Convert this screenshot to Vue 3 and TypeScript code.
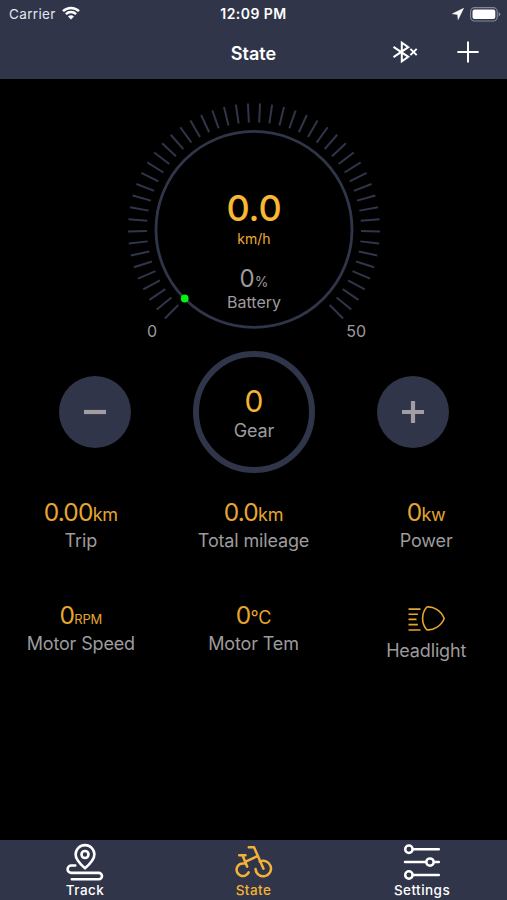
<script setup lang="ts">
interface Stat {
  value: string
  unit: string
  label: string
  size: 'sm' | 'md'
  icon?: boolean
}

const tickCount = 50
const ticks: number[] = Array.from(
  { length: tickCount },
  (_, i) => -135 + (i * 270) / (tickCount - 1),
)

const stats: Stat[] = [
  { value: '0.00', unit: 'km', label: 'Trip', size: 'md' },
  { value: '0.0', unit: 'km', label: 'Total mileage', size: 'md' },
  { value: '0', unit: 'kw', label: 'Power', size: 'md' },
  { value: '0', unit: 'RPM', label: 'Motor Speed', size: 'sm' },
  { value: '0', unit: '°C', label: 'Motor Tem', size: 'md' },
  { value: '', unit: '', label: 'Headlight', size: 'md', icon: true },
]
</script>

<template>
  <div class="screen">
    <header class="header">
      <div class="status">
        <div class="carrier">
          <span>Carrier</span>
          <svg class="wifi" width="18" height="14" viewBox="0 0 18 14">
            <g fill="none" stroke="#fff" stroke-width="2.5">
              <path d="M1 5.1a11.6 11.6 0 0 1 16 0" />
              <path d="M3.9 8.2a7.3 7.3 0 0 1 10.2 0" />
            </g>
            <path d="M9 13.6 6 10.6a4.3 4.3 0 0 1 6 0z" fill="#fff" />
          </svg>
        </div>
        <span class="clock">12:09 PM</span>
        <div class="power">
          <svg width="12" height="12" viewBox="0 0 12 12">
            <path d="M11.6.3.4 5.800l5.200.6.5 5.200z" fill="#fff" stroke="#fff" stroke-width=".5" stroke-linejoin="round" />
          </svg>
          <svg width="31" height="15" viewBox="0 0 31 15">
            <rect x=".6" y=".6" width="26.6" height="13.4" rx="4" fill="none" stroke="#858997" stroke-width="1.1" />
            <rect x="2.5" y="2.5" width="22.8" height="9.6" rx="2" fill="#fff" />
            <path d="M28.6 5v4.6q1.7-.8 1.7-2.3T28.6 5z" fill="#858997" />
          </svg>
        </div>
      </div>
      <div class="navbar">
        <h1 class="title">State</h1>
        <div class="actions">
          <svg width="28" height="26" viewBox="0 0 28 26" fill="none" stroke="#fff" stroke-width="2">
            <path d="M2.500 7.800 17.300 17.800 10.800 22.300V3.700l6.500 4.500L2.500 18.200" />
            <path d="m19.4 9.900 6.300 6.200m0-6.200-6.300 6.200" />
          </svg>
          <svg width="22" height="22" viewBox="0 0 22 22" fill="none" stroke="#fff" stroke-width="2">
            <path d="M11 .4v21.2M.4 11h21.2" />
          </svg>
        </div>
      </div>
    </header>

    <main class="main">
      <section class="gauge">
        <svg class="dial" width="256" height="256" viewBox="-128 -128.4 256 256">
          <g stroke="#30354a" stroke-width="2">
            <line v-for="angle in ticks" :key="angle" x1="0" y1="-126" x2="0" y2="-107" :transform="`rotate(${angle})`" />
          </g>
          <circle r="98" fill="none" stroke="#30354a" stroke-width="2.8" />
          <circle cx="-69.3" cy="69.1" r="3.9" fill="#00f410" />
        </svg>
        <div class="readout">
          <div class="speed">0.0</div>
          <div class="speed-unit">km/h</div>
          <div class="battery">0<span class="percent">%</span></div>
          <div class="battery-label">Battery</div>
        </div>
        <div class="scale"><span>0</span><span>50</span></div>
      </section>

      <section class="gear-row">
        <button class="round" type="button" aria-label="Gear down">
          <svg width="22" height="22" viewBox="0 0 22 22"><path d="M0 11h22" stroke="#a19da2" stroke-width="4.2" /></svg>
        </button>
        <div class="gear">
          <div class="gear-value">0</div>
          <div class="gear-label">Gear</div>
        </div>
        <button class="round" type="button" aria-label="Gear up">
          <svg width="22" height="22" viewBox="0 0 22 22"><path d="M0 11h22M11 0v22" stroke="#a19da2" stroke-width="4.2" /></svg>
        </button>
      </section>

      <section class="stats">
        <div v-for="stat in stats" :key="stat.label" class="stat">
          <svg v-if="stat.icon" class="lamp" width="38" height="26" viewBox="0 0 38 26" fill="none" stroke="#e5a62f" stroke-width="1.6">
            <path d="M1.500 3.100h12M1.500 8.200h9.400M1.500 13.400h8M1.500 18.600h9.400M1.500 24h12" />
            <path d="M19.800 1C26 .2 34 4.200 37.200 12.500 34 20.500 26 24.600 19.800 23.700 14.200 17.500 14.200 7.500 19.800 1z" stroke-linejoin="round" />
          </svg>
          <div v-else class="value"><span class="number">{{ stat.value }}</span><span :class="['unit', stat.size]">{{ stat.unit }}</span></div>
          <div class="label">{{ stat.label }}</div>
        </div>
      </section>
    </main>

    <nav class="tabs">
      <a class="tab">
        <svg width="38" height="38" viewBox="0 0 38 38" fill="none" stroke="#fff" stroke-width="2.600" stroke-linecap="round" stroke-linejoin="round">
          <path d="M19 25.300C13.500 20.500 9.600 16.500 9.600 11.500a9.400 9.400 0 0 1 18.800 0C28.400 16.500 24.500 20.500 19 25.300z" />
          <circle cx="19" cy="11.500" r="3.500" />
          <path d="M9.300 22.500H5.300a3.700 3.700 0 0 0 0 7.400h27.500a3.200 3.200 0 0 1 0 6.400H5.800" />
        </svg>
        <span class="tab-name">Track</span>
      </a>
      <a class="tab active">
        <svg width="38" height="38" viewBox="0 0 38 38" fill="none" stroke="#f5b335" stroke-width="2.500" stroke-linecap="round" stroke-linejoin="round">
          <path d="M9.500 20.600A6.300 6.300 0 1 0 13.600 29.400" />
          <path d="M24.800 18.700a7.700 7.700 0 1 1-4.200 7.400" />
          <path d="M28.500 25.700 19 4.200h-5.200M4.200 12.300h6.300M7.600 12.500l4.600 11.200M10.200 18.800l12.800-5.900" />
        </svg>
        <span class="tab-name">State</span>
      </a>
      <a class="tab">
        <svg width="38" height="38" viewBox="0 0 38 38" fill="none" stroke="#fff" stroke-width="2.500" stroke-linecap="round">
          <circle cx="5.900" cy="6.300" r="3.700" />
          <path d="M9.800 6.300h26M2 19.100h20.500M31 19.100h4.800M9.800 32h26" />
          <circle cx="27" cy="19.100" r="3.700" />
          <circle cx="5.900" cy="32" r="3.700" />
        </svg>
        <span class="tab-name">Settings</span>
      </a>
    </nav>
  </div>
</template>

<style>
body {
  margin: 0;
  background: #000;
}
</style>

<style scoped>
.screen {
  display: flex;
  flex-direction: column;
  width: 507px;
  height: 900px;
  overflow: hidden;
  background: #000;
  font-family: Inter, "Liberation Sans", sans-serif;
  color: #9d9b9d;
}
.header {
  height: 79px;
  flex: none;
  background: #30354a;
  color: #fff;
}
.status {
  display: grid;
  grid-template-columns: 1fr auto 1fr;
  align-items: center;
  height: 28px;
  padding: 0 6px 0 9px;
}
.carrier {
  display: flex;
  align-items: center;
  gap: 6px;
  font-size: 13.5px;
  letter-spacing: 0.35px;
  color: #e4e6ee;
}
.wifi {
  margin-top: -2px;
}
.clock {
  margin: 0 3px 2px 0;
  font-size: 14px;
  font-weight: 600;
  letter-spacing: 0.45px;
}
.power {
  display: flex;
  justify-content: flex-end;
  align-items: center;
  gap: 6px;
}
.navbar {
  display: grid;
  grid-template-columns: 1fr auto 1fr;
  align-items: center;
  height: 49px;
}
.title {
  grid-column: 2;
  margin: 2px 0 0;
  font-size: 18px;
  font-weight: 600;
}
.actions {
  display: flex;
  justify-content: flex-end;
  align-items: center;
  gap: 38px;
  padding: 0 28px 2px 0;
}
.main {
  flex: 1;
}
.gauge {
  display: grid;
  justify-content: center;
  height: 272px;
  padding-left: 1px;
}
.dial {
  grid-area: 1 / 1;
  margin-top: 22px;
}
.readout {
  grid-area: 1 / 1;
  padding-top: 107px;
  text-align: center;
}
.speed {
  font-size: 36px;
  font-weight: 500;
  line-height: 44px;
  letter-spacing: -0.1px;
  color: #f9b734;
}
.speed-unit {
  font-size: 14px;
  line-height: 20px;
  margin-top: -1px;
  color: #eeac30;
}
.battery {
  height: 29px;
  margin-top: 15px;
  font-size: 24px;
  line-height: 30px;
}
.percent {
  font-size: 14px;
}
.battery-label {
  font-size: 16px;
  line-height: 18px;
}
.scale {
  grid-area: 1 / 1;
  align-self: end;
  display: flex;
  justify-content: space-between;
  padding: 0 16px 0 21px;
  font-size: 16px;
  line-height: 20px;
  margin-bottom: 16px;
}
.gear-row {
  display: flex;
  justify-content: space-between;
  align-items: center;
  height: 122px;
  padding: 0 58px 0 59px;
}
.round {
  display: grid;
  place-items: center;
  width: 72px;
  height: 72px;
  padding: 0;
  border: 0;
  border-radius: 50%;
  background: #30354a;
}
.gear {
  box-sizing: border-box;
  width: 122px;
  height: 122px;
  border: 6px solid #30354a;
  border-radius: 50%;
  padding-top: 26px;
  text-align: center;
}
.gear-value {
  font-size: 30px;
  line-height: 36px;
  color: #f5b335;
}
.gear-label {
  font-size: 18px;
  line-height: 24px;
  letter-spacing: -0.15px;
}
.stats {
  display: grid;
  grid-template-columns: repeat(3, 172.700px);
  grid-auto-rows: 103px;
  justify-content: center;
  padding-top: 24px;
}
.stat {
  text-align: center;
}
.value {
  height: 32px;
  font-size: 24.5px;
  line-height: 30px;
  color: #e5a62f;
}
.number {
  letter-spacing: -0.8px;
}
.unit.md {
  font-size: 18px;
  letter-spacing: -0.2px;
}
.unit.sm {
  font-size: 13px;
  letter-spacing: -0.2px;
}
.label {
  font-size: 18px;
  line-height: 23px;
  letter-spacing: -0.15px;
}
.lamp {
  display: block;
  margin: 6px auto 7px;
}
.tabs {
  display: grid;
  grid-template-columns: repeat(3, 168.500px);
  justify-content: center;
  flex: none;
  height: 60px;
  background: #30354a;
  color: #fff;
}
.tab {
  display: flex;
  flex-direction: column;
  align-items: center;
  padding-top: 3px;
}
.tab-name {
  font-size: 13.500px;
  font-weight: 500;
  line-height: 18px;
  letter-spacing: 0.45px;
}
.active {
  color: #f5b335;
}
</style>
